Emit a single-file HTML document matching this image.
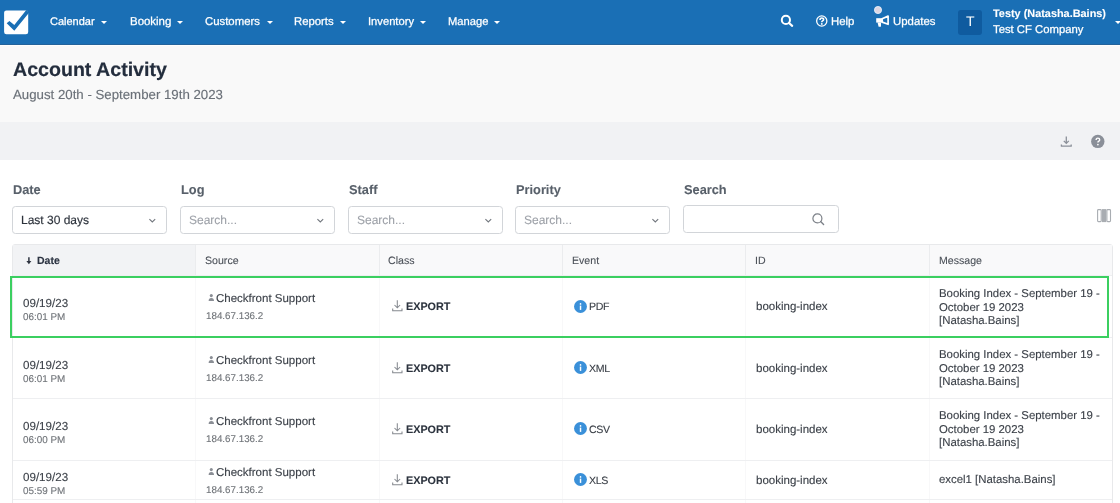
<!DOCTYPE html>
<html><head><meta charset="utf-8">
<style>
*{box-sizing:border-box;margin:0;padding:0}
html,body{width:1120px;height:503px;overflow:hidden;background:#fff;font-family:"Liberation Sans",sans-serif;text-rendering:geometricPrecision}
.a{position:absolute;white-space:nowrap;will-change:transform}
.caret{position:absolute;width:0;height:0;border-left:3px solid transparent;border-right:3px solid transparent;border-top:3px solid #fff}
.sel{position:absolute;top:206px;width:155px;height:28px;border:1px solid #d2d5d9;border-radius:3.5px;background:#fff}
</style></head><body>
<div class="a" style="left:0;top:0;width:1120px;height:45px;background:#1a6fb5;border-bottom:1px solid #24639b"></div>
<svg class="a" style="left:0;top:5px" width="35" height="35" viewBox="0 0 35 35">
<rect x="4.1" y="5.4" width="24.1" height="23.9" rx="2.3" fill="#fff"/>
<path d="M6.7 18.2 L9.4 15.9 L14.3 20.1 L26.3 4.9 L29.2 7.5 L14.3 25.8 Z" fill="#1a6fb5"/>
</svg>
<div class="a" style="left:50.30px;top:10px;font-size:11.0px;line-height:24px;color:#fff;font-weight:normal;-webkit-text-stroke:0.25px #fff;">Calendar</div>
<div class="caret" style="left:101.3px;top:20.8px"></div>
<div class="a" style="left:129.60px;top:10px;font-size:11.45px;line-height:24px;color:#fff;font-weight:normal;-webkit-text-stroke:0.25px #fff;">Booking</div>
<div class="caret" style="left:177.0px;top:20.8px"></div>
<div class="a" style="left:205.00px;top:10px;font-size:11.37px;line-height:24px;color:#fff;font-weight:normal;-webkit-text-stroke:0.25px #fff;">Customers</div>
<div class="caret" style="left:266.5px;top:20.8px"></div>
<div class="a" style="left:293.90px;top:10px;font-size:11.33px;line-height:24px;color:#fff;font-weight:normal;-webkit-text-stroke:0.25px #fff;">Reports</div>
<div class="caret" style="left:339.5px;top:20.8px"></div>
<div class="a" style="left:367.90px;top:10px;font-size:11.2px;line-height:24px;color:#fff;font-weight:normal;-webkit-text-stroke:0.25px #fff;">Inventory</div>
<div class="caret" style="left:419.8px;top:20.8px"></div>
<div class="a" style="left:447.80px;top:10px;font-size:11.2px;line-height:24px;color:#fff;font-weight:normal;-webkit-text-stroke:0.25px #fff;">Manage</div>
<div class="caret" style="left:494.2px;top:20.8px"></div>
<svg class="a" style="left:780px;top:14px" width="15" height="14" viewBox="0 0 15 14">
<circle cx="5.9" cy="5.9" r="4.1" stroke="#fff" stroke-width="2" fill="none"/>
<path d="M9 9 L12.2 11.9" stroke="#fff" stroke-width="2.1" stroke-linecap="round"/>
</svg>
<svg class="a" style="left:815px;top:14px" width="14" height="14" viewBox="0 0 14 14">
<circle cx="6.75" cy="7" r="5.1" stroke="#fff" stroke-width="1.3" fill="none"/>
<path d="M5 5.9 Q5 4 6.8 4 Q8.6 4 8.6 5.5 Q8.6 6.4 7.6 6.9 Q6.8 7.3 6.8 8.3" stroke="#fff" stroke-width="1.6" fill="none"/>
<circle cx="6.8" cy="9.9" r="0.95" fill="#fff"/>
</svg>
<div class="a" style="left:873.9px;top:6.3px;width:7.8px;height:7.8px;border-radius:50%;background:#dcd6e2;border:1.2px solid #e6eefa"></div>
<svg class="a" style="left:875px;top:14px" width="15" height="14" viewBox="0 0 15 14">
<rect x="1.2" y="4.2" width="6" height="4.4" fill="#fff"/>
<path d="M7.2 4.7 L13.1 2.1 L13.1 10.3 L7.2 8.1 Z" stroke="#fff" stroke-width="1.7" fill="none" stroke-linejoin="round"/>
<path d="M2.6 8.4 L6.1 8.4 L5.9 12.7 L3.6 12.7 Z" fill="#fff"/>
</svg>
<div class="a" style="left:958.3px;top:9.6px;width:24.4px;height:24.9px;border-radius:3px;background:#0f5b9f"></div>
<div class="a" style="left:830.50px;top:10px;font-size:11.4px;line-height:24px;color:#fff;font-weight:normal;-webkit-text-stroke:0.25px #fff;">Help</div>
<div class="a" style="left:893.00px;top:10px;font-size:11.4px;line-height:24px;color:#fff;font-weight:normal;-webkit-text-stroke:0.25px #fff;">Updates</div>
<div class="a" style="left:966.30px;top:9px;font-size:14px;line-height:24px;color:#fff;font-weight:normal;">T</div>
<div class="a" style="left:993.30px;top:2px;font-size:10.9px;line-height:24px;color:#fff;font-weight:bold;-webkit-text-stroke:0.1px #fff;">Testy (Natasha.Bains)</div>
<div class="a" style="left:993.30px;top:18px;font-size:11.3px;line-height:24px;color:#fff;font-weight:normal;-webkit-text-stroke:0.25px #fff;">Test CF Company</div>
<div class="caret" style="left:1115.3px;top:21px"></div>
<div class="a" style="left:0;top:45px;width:1120px;height:77px;background:#f9f9f9;border-top:1px solid #fdfefe"></div>
<div class="a" style="left:12.50px;top:58px;font-size:19.6px;line-height:24px;color:#232d3d;font-weight:bold;-webkit-text-stroke:0.2px #232d3d;">Account Activity</div>
<div class="a" style="left:12.60px;top:83px;font-size:13.25px;line-height:24px;color:#6a7078;font-weight:normal;-webkit-text-stroke:0.15px #6a7078;">August 20th - September 19th 2023</div>
<div class="a" style="left:0;top:122px;width:1120px;height:38px;background:#f1f2f4"></div>
<svg class="a" style="left:1060px;top:135px" width="13" height="13" viewBox="0 0 13 13">
<path d="M6.3 1.4 L6.3 8.2 M3.8 5.9 L6.3 8.4 L8.8 5.9" stroke="#8b9099" stroke-width="1.3" fill="none"/>
<path d="M1.4 9.6 L1.4 11.2 L11.2 11.2 L11.2 9.6" stroke="#8b9099" stroke-width="1.3" fill="none" stroke-linejoin="round"/>
</svg>
<svg class="a" style="left:1090px;top:134px" width="16" height="16" viewBox="0 0 16 16">
<circle cx="7.8" cy="7.4" r="6.7" fill="#8a8f98"/>
<path d="M6.1 6 Q6.1 4.1 7.9 4.1 Q9.7 4.1 9.7 5.7 Q9.7 6.6 8.8 7.1 Q7.9 7.6 7.9 8.6" stroke="#fff" stroke-width="1.35" fill="none"/>
<circle cx="7.9" cy="10.6" r="0.85" fill="#fff"/>
</svg>
<div class="a" style="left:12.80px;top:178px;font-size:12.8px;line-height:24px;color:#58606a;font-weight:bold;-webkit-text-stroke:0.1px #58606a;">Date</div>
<div class="a" style="left:180.80px;top:178px;font-size:12.8px;line-height:24px;color:#58606a;font-weight:bold;-webkit-text-stroke:0.1px #58606a;">Log</div>
<div class="a" style="left:348.60px;top:178px;font-size:12.8px;line-height:24px;color:#58606a;font-weight:bold;-webkit-text-stroke:0.1px #58606a;">Staff</div>
<div class="a" style="left:515.80px;top:178px;font-size:12.8px;line-height:24px;color:#58606a;font-weight:bold;-webkit-text-stroke:0.1px #58606a;">Priority</div>
<div class="a" style="left:683.80px;top:178px;font-size:12.8px;line-height:24px;color:#58606a;font-weight:bold;-webkit-text-stroke:0.1px #58606a;">Search</div>
<div class="sel" style="left:12px"><svg class="a" style="left:135px;top:9px" width="9" height="9" viewBox="0 0 9 9"><path d="M1.4 3.1 L4.3 5.9 L7.2 3.1" stroke="#72777e" stroke-width="1.1" fill="none"/></svg></div>
<div class="sel" style="left:180px"><svg class="a" style="left:135px;top:9px" width="9" height="9" viewBox="0 0 9 9"><path d="M1.4 3.1 L4.3 5.9 L7.2 3.1" stroke="#72777e" stroke-width="1.1" fill="none"/></svg></div>
<div class="sel" style="left:348px"><svg class="a" style="left:135px;top:9px" width="9" height="9" viewBox="0 0 9 9"><path d="M1.4 3.1 L4.3 5.9 L7.2 3.1" stroke="#72777e" stroke-width="1.1" fill="none"/></svg></div>
<div class="sel" style="left:515px"><svg class="a" style="left:135px;top:9px" width="9" height="9" viewBox="0 0 9 9"><path d="M1.4 3.1 L4.3 5.9 L7.2 3.1" stroke="#72777e" stroke-width="1.1" fill="none"/></svg></div>
<div class="a" style="left:21.30px;top:208px;font-size:12px;line-height:24px;color:#2d333c;font-weight:normal;-webkit-text-stroke:0.15px #2d333c;">Last 30 days</div>
<div class="a" style="left:188.80px;top:208px;font-size:12px;line-height:24px;color:#9da1a8;font-weight:normal;-webkit-text-stroke:0.1px #9da1a8;">Search...</div>
<div class="a" style="left:356.80px;top:208px;font-size:12px;line-height:24px;color:#9da1a8;font-weight:normal;-webkit-text-stroke:0.1px #9da1a8;">Search...</div>
<div class="a" style="left:523.80px;top:208px;font-size:12px;line-height:24px;color:#9da1a8;font-weight:normal;-webkit-text-stroke:0.1px #9da1a8;">Search...</div>
<div class="sel" style="left:683px;width:155.5px;top:205px;height:28.3px"><svg class="a" style="left:127.5px;top:7px" width="13" height="13" viewBox="0 0 13 13"><circle cx="5.4" cy="5.4" r="4.5" stroke="#7c8188" stroke-width="1.2" fill="none"/><path d="M8.6 8.6 L11.6 11.6" stroke="#7c8188" stroke-width="1.4" stroke-linecap="round"/></svg></div>
<svg class="a" style="left:1097px;top:208.8px" width="15" height="14" viewBox="0 0 15 14">
<rect x="0.6" y="0.6" width="3.6" height="12" rx="0.8" stroke="#a9adb2" stroke-width="1.1" fill="none"/>
<rect x="4.9" y="0.1" width="4.4" height="13" fill="#a9adb2"/>
<rect x="9.9" y="0.6" width="3.6" height="12" rx="0.8" stroke="#a9adb2" stroke-width="1.1" fill="none"/>
</svg>
<div class="a" style="left:12px;top:244px;width:1101px;height:300px;border:1px solid #e8e9eb;border-radius:3px;background:#fff"></div>
<div class="a" style="left:13px;top:245px;width:1099px;height:30px;background:#f9f9fa"></div>
<div class="a" style="left:13px;top:245px;width:182px;height:30px;background:#f2f3f5"></div>
<div class="a" style="left:195px;top:245px;width:1px;height:30px;background:#ebecee"></div>
<div class="a" style="left:195px;top:275px;width:1px;height:300px;background:#f8f8f9"></div>
<div class="a" style="left:379px;top:245px;width:1px;height:30px;background:#ebecee"></div>
<div class="a" style="left:379px;top:275px;width:1px;height:300px;background:#f8f8f9"></div>
<div class="a" style="left:562px;top:245px;width:1px;height:30px;background:#ebecee"></div>
<div class="a" style="left:562px;top:275px;width:1px;height:300px;background:#f8f8f9"></div>
<div class="a" style="left:745px;top:245px;width:1px;height:30px;background:#ebecee"></div>
<div class="a" style="left:745px;top:275px;width:1px;height:300px;background:#f8f8f9"></div>
<div class="a" style="left:929px;top:245px;width:1px;height:30px;background:#ebecee"></div>
<div class="a" style="left:929px;top:275px;width:1px;height:300px;background:#f8f8f9"></div>
<svg class="a" style="left:26px;top:256px" width="6" height="9" viewBox="0 0 6 9">
<path d="M2.9 1.2 L2.9 6" stroke="#2e3440" stroke-width="1.5"/>
<path d="M0.4 5 L5.4 5 L2.9 8.3 Z" fill="#2e3440"/>
</svg>
<div class="a" style="left:37.30px;top:249px;font-size:10.5px;line-height:24px;color:#2b3341;font-weight:bold;-webkit-text-stroke:0.15px #2b3341;">Date</div>
<div class="a" style="left:205.20px;top:249px;font-size:10.6px;line-height:24px;color:#4b5058;font-weight:normal;-webkit-text-stroke:0.1px #4b5058;">Source</div>
<div class="a" style="left:388.30px;top:249px;font-size:10.6px;line-height:24px;color:#4b5058;font-weight:normal;-webkit-text-stroke:0.1px #4b5058;">Class</div>
<div class="a" style="left:571.50px;top:249px;font-size:10.6px;line-height:24px;color:#4b5058;font-weight:normal;-webkit-text-stroke:0.1px #4b5058;">Event</div>
<div class="a" style="left:755.20px;top:249px;font-size:10.6px;line-height:24px;color:#4b5058;font-weight:normal;-webkit-text-stroke:0.1px #4b5058;">ID</div>
<div class="a" style="left:938.50px;top:249px;font-size:10.6px;line-height:24px;color:#4b5058;font-weight:normal;-webkit-text-stroke:0.1px #4b5058;">Message</div>
<div class="a" style="left:13px;top:275px;width:1099px;height:1px;background:#eeeff1"></div>
<div class="a" style="left:13px;top:337px;width:1099px;height:1px;background:#eeeff1"></div>
<div class="a" style="left:13px;top:398px;width:1099px;height:1px;background:#eeeff1"></div>
<div class="a" style="left:13px;top:460px;width:1099px;height:1px;background:#eeeff1"></div>
<div class="a" style="left:13px;top:499px;width:1099px;height:1px;background:#eeeff1"></div>
<div class="a" style="left:22.80px;top:292px;font-size:11.6px;line-height:24px;color:#3b4048;font-weight:normal;-webkit-text-stroke:0.12px #3b4048;">09/19/23</div>
<div class="a" style="left:22.90px;top:306px;font-size:9.9px;line-height:24px;color:#6f7378;font-weight:normal;-webkit-text-stroke:0.12px #6f7378;">06:01 PM</div>
<svg class="a" style="left:207.9px;top:294.3px" width="7" height="8" viewBox="0 0 7 8"><circle cx="3.3" cy="1.6" r="1.55" fill="#8a8e95"/><path d="M0.6 7 Q0.6 4 3.3 4 Q6 4 6 7Z" fill="#8a8e95"/></svg>
<div class="a" style="left:215.70px;top:287px;font-size:11.5px;line-height:24px;color:#3b4048;font-weight:normal;-webkit-text-stroke:0.12px #3b4048;">Checkfront Support</div>
<div class="a" style="left:206.40px;top:305px;font-size:9.8px;line-height:24px;color:#6f7378;font-weight:normal;-webkit-text-stroke:0.12px #6f7378;">184.67.136.2</div>
<svg class="a" style="left:391.7px;top:300.0px" width="12" height="13" viewBox="0 0 12 13"><path d="M5.3 0.3 L5.3 7.8 M2.5 5 L5.3 7.8 L8.1 5" stroke="#85898f" stroke-width="1.05" fill="none"/><path d="M0.7 8.6 L0.7 10.8 L10 10.8 L10 8.6" stroke="#85898f" stroke-width="1.05" fill="none"/></svg>
<div class="a" style="left:405.60px;top:295px;font-size:10.8px;line-height:24px;color:#2b323d;font-weight:bold;-webkit-text-stroke:0.1px #2b323d;">EXPORT</div>
<svg class="a" style="left:573.8px;top:299.8px" width="14" height="14" viewBox="0 0 14 14"><circle cx="6.5" cy="6.5" r="6.45" fill="#3a90d9"/><rect x="5.8" y="5.6" width="1.45" height="4.3" fill="#fff"/><circle cx="6.52" cy="3.9" r="0.85" fill="#fff"/></svg>
<div class="a" style="left:588.60px;top:295px;font-size:10.6px;line-height:24px;color:#3b4048;font-weight:normal;-webkit-text-stroke:0.12px #3b4048;letter-spacing:-0.35px;">PDF</div>
<div class="a" style="left:756.20px;top:295px;font-size:11.5px;line-height:24px;color:#3b4048;font-weight:normal;-webkit-text-stroke:0.12px #3b4048;">booking-index</div>
<div class="a" style="left:939.40px;top:282px;font-size:11.4px;line-height:24px;color:#3b4048;font-weight:normal;-webkit-text-stroke:0.12px #3b4048;">Booking Index - September 19 -</div>
<div class="a" style="left:939.40px;top:296px;font-size:11.4px;line-height:24px;color:#3b4048;font-weight:normal;-webkit-text-stroke:0.12px #3b4048;">October 19 2023</div>
<div class="a" style="left:939.40px;top:309px;font-size:11.4px;line-height:24px;color:#3b4048;font-weight:normal;-webkit-text-stroke:0.12px #3b4048;">[Natasha.Bains]</div>
<div class="a" style="left:22.80px;top:354px;font-size:11.6px;line-height:24px;color:#3b4048;font-weight:normal;-webkit-text-stroke:0.12px #3b4048;">09/19/23</div>
<div class="a" style="left:22.90px;top:368px;font-size:9.9px;line-height:24px;color:#6f7378;font-weight:normal;-webkit-text-stroke:0.12px #6f7378;">06:01 PM</div>
<svg class="a" style="left:207.9px;top:355.8px" width="7" height="8" viewBox="0 0 7 8"><circle cx="3.3" cy="1.6" r="1.55" fill="#8a8e95"/><path d="M0.6 7 Q0.6 4 3.3 4 Q6 4 6 7Z" fill="#8a8e95"/></svg>
<div class="a" style="left:215.70px;top:349px;font-size:11.5px;line-height:24px;color:#3b4048;font-weight:normal;-webkit-text-stroke:0.12px #3b4048;">Checkfront Support</div>
<div class="a" style="left:206.40px;top:367px;font-size:9.8px;line-height:24px;color:#6f7378;font-weight:normal;-webkit-text-stroke:0.12px #6f7378;">184.67.136.2</div>
<svg class="a" style="left:391.7px;top:361.5px" width="12" height="13" viewBox="0 0 12 13"><path d="M5.3 0.3 L5.3 7.8 M2.5 5 L5.3 7.8 L8.1 5" stroke="#85898f" stroke-width="1.05" fill="none"/><path d="M0.7 8.6 L0.7 10.8 L10 10.8 L10 8.6" stroke="#85898f" stroke-width="1.05" fill="none"/></svg>
<div class="a" style="left:405.60px;top:357px;font-size:10.8px;line-height:24px;color:#2b323d;font-weight:bold;-webkit-text-stroke:0.1px #2b323d;">EXPORT</div>
<svg class="a" style="left:573.8px;top:361.3px" width="14" height="14" viewBox="0 0 14 14"><circle cx="6.5" cy="6.5" r="6.45" fill="#3a90d9"/><rect x="5.8" y="5.6" width="1.45" height="4.3" fill="#fff"/><circle cx="6.52" cy="3.9" r="0.85" fill="#fff"/></svg>
<div class="a" style="left:588.60px;top:357px;font-size:10.6px;line-height:24px;color:#3b4048;font-weight:normal;-webkit-text-stroke:0.12px #3b4048;letter-spacing:-0.35px;">XML</div>
<div class="a" style="left:756.20px;top:357px;font-size:11.5px;line-height:24px;color:#3b4048;font-weight:normal;-webkit-text-stroke:0.12px #3b4048;">booking-index</div>
<div class="a" style="left:939.40px;top:343px;font-size:11.4px;line-height:24px;color:#3b4048;font-weight:normal;-webkit-text-stroke:0.12px #3b4048;">Booking Index - September 19 -</div>
<div class="a" style="left:939.40px;top:357px;font-size:11.4px;line-height:24px;color:#3b4048;font-weight:normal;-webkit-text-stroke:0.12px #3b4048;">October 19 2023</div>
<div class="a" style="left:939.40px;top:370px;font-size:11.4px;line-height:24px;color:#3b4048;font-weight:normal;-webkit-text-stroke:0.12px #3b4048;">[Natasha.Bains]</div>
<div class="a" style="left:22.80px;top:415px;font-size:11.6px;line-height:24px;color:#3b4048;font-weight:normal;-webkit-text-stroke:0.12px #3b4048;">09/19/23</div>
<div class="a" style="left:22.90px;top:429px;font-size:9.9px;line-height:24px;color:#6f7378;font-weight:normal;-webkit-text-stroke:0.12px #6f7378;">06:00 PM</div>
<svg class="a" style="left:207.9px;top:416.8px" width="7" height="8" viewBox="0 0 7 8"><circle cx="3.3" cy="1.6" r="1.55" fill="#8a8e95"/><path d="M0.6 7 Q0.6 4 3.3 4 Q6 4 6 7Z" fill="#8a8e95"/></svg>
<div class="a" style="left:215.70px;top:410px;font-size:11.5px;line-height:24px;color:#3b4048;font-weight:normal;-webkit-text-stroke:0.12px #3b4048;">Checkfront Support</div>
<div class="a" style="left:206.40px;top:428px;font-size:9.8px;line-height:24px;color:#6f7378;font-weight:normal;-webkit-text-stroke:0.12px #6f7378;">184.67.136.2</div>
<svg class="a" style="left:391.7px;top:422.5px" width="12" height="13" viewBox="0 0 12 13"><path d="M5.3 0.3 L5.3 7.8 M2.5 5 L5.3 7.8 L8.1 5" stroke="#85898f" stroke-width="1.05" fill="none"/><path d="M0.7 8.6 L0.7 10.8 L10 10.8 L10 8.6" stroke="#85898f" stroke-width="1.05" fill="none"/></svg>
<div class="a" style="left:405.60px;top:418px;font-size:10.8px;line-height:24px;color:#2b323d;font-weight:bold;-webkit-text-stroke:0.1px #2b323d;">EXPORT</div>
<svg class="a" style="left:573.8px;top:422.3px" width="14" height="14" viewBox="0 0 14 14"><circle cx="6.5" cy="6.5" r="6.45" fill="#3a90d9"/><rect x="5.8" y="5.6" width="1.45" height="4.3" fill="#fff"/><circle cx="6.52" cy="3.9" r="0.85" fill="#fff"/></svg>
<div class="a" style="left:588.60px;top:418px;font-size:10.6px;line-height:24px;color:#3b4048;font-weight:normal;-webkit-text-stroke:0.12px #3b4048;letter-spacing:-0.35px;">CSV</div>
<div class="a" style="left:756.20px;top:418px;font-size:11.5px;line-height:24px;color:#3b4048;font-weight:normal;-webkit-text-stroke:0.12px #3b4048;">booking-index</div>
<div class="a" style="left:939.40px;top:404px;font-size:11.4px;line-height:24px;color:#3b4048;font-weight:normal;-webkit-text-stroke:0.12px #3b4048;">Booking Index - September 19 -</div>
<div class="a" style="left:939.40px;top:418px;font-size:11.4px;line-height:24px;color:#3b4048;font-weight:normal;-webkit-text-stroke:0.12px #3b4048;">October 19 2023</div>
<div class="a" style="left:939.40px;top:431px;font-size:11.4px;line-height:24px;color:#3b4048;font-weight:normal;-webkit-text-stroke:0.12px #3b4048;">[Natasha.Bains]</div>
<div class="a" style="left:22.80px;top:466px;font-size:11.6px;line-height:24px;color:#3b4048;font-weight:normal;-webkit-text-stroke:0.12px #3b4048;">09/19/23</div>
<div class="a" style="left:22.90px;top:480px;font-size:9.9px;line-height:24px;color:#6f7378;font-weight:normal;-webkit-text-stroke:0.12px #6f7378;">05:59 PM</div>
<svg class="a" style="left:207.9px;top:467.8px" width="7" height="8" viewBox="0 0 7 8"><circle cx="3.3" cy="1.6" r="1.55" fill="#8a8e95"/><path d="M0.6 7 Q0.6 4 3.3 4 Q6 4 6 7Z" fill="#8a8e95"/></svg>
<div class="a" style="left:215.70px;top:461px;font-size:11.5px;line-height:24px;color:#3b4048;font-weight:normal;-webkit-text-stroke:0.12px #3b4048;">Checkfront Support</div>
<div class="a" style="left:206.40px;top:479px;font-size:9.8px;line-height:24px;color:#6f7378;font-weight:normal;-webkit-text-stroke:0.12px #6f7378;">184.67.136.2</div>
<svg class="a" style="left:391.7px;top:473.5px" width="12" height="13" viewBox="0 0 12 13"><path d="M5.3 0.3 L5.3 7.8 M2.5 5 L5.3 7.8 L8.1 5" stroke="#85898f" stroke-width="1.05" fill="none"/><path d="M0.7 8.6 L0.7 10.8 L10 10.8 L10 8.6" stroke="#85898f" stroke-width="1.05" fill="none"/></svg>
<div class="a" style="left:405.60px;top:469px;font-size:10.8px;line-height:24px;color:#2b323d;font-weight:bold;-webkit-text-stroke:0.1px #2b323d;">EXPORT</div>
<svg class="a" style="left:573.8px;top:473.3px" width="14" height="14" viewBox="0 0 14 14"><circle cx="6.5" cy="6.5" r="6.45" fill="#3a90d9"/><rect x="5.8" y="5.6" width="1.45" height="4.3" fill="#fff"/><circle cx="6.52" cy="3.9" r="0.85" fill="#fff"/></svg>
<div class="a" style="left:588.60px;top:469px;font-size:10.6px;line-height:24px;color:#3b4048;font-weight:normal;-webkit-text-stroke:0.12px #3b4048;letter-spacing:-0.35px;">XLS</div>
<div class="a" style="left:756.20px;top:469px;font-size:11.5px;line-height:24px;color:#3b4048;font-weight:normal;-webkit-text-stroke:0.12px #3b4048;">booking-index</div>
<div class="a" style="left:939.40px;top:468px;font-size:11.4px;line-height:24px;color:#3b4048;font-weight:normal;-webkit-text-stroke:0.12px #3b4048;">excel1 [Natasha.Bains]</div>
<div class="a" style="left:9.5px;top:275.6px;width:1099px;height:62.4px;border:2.8px solid #3bcf60"></div>
</body></html>
